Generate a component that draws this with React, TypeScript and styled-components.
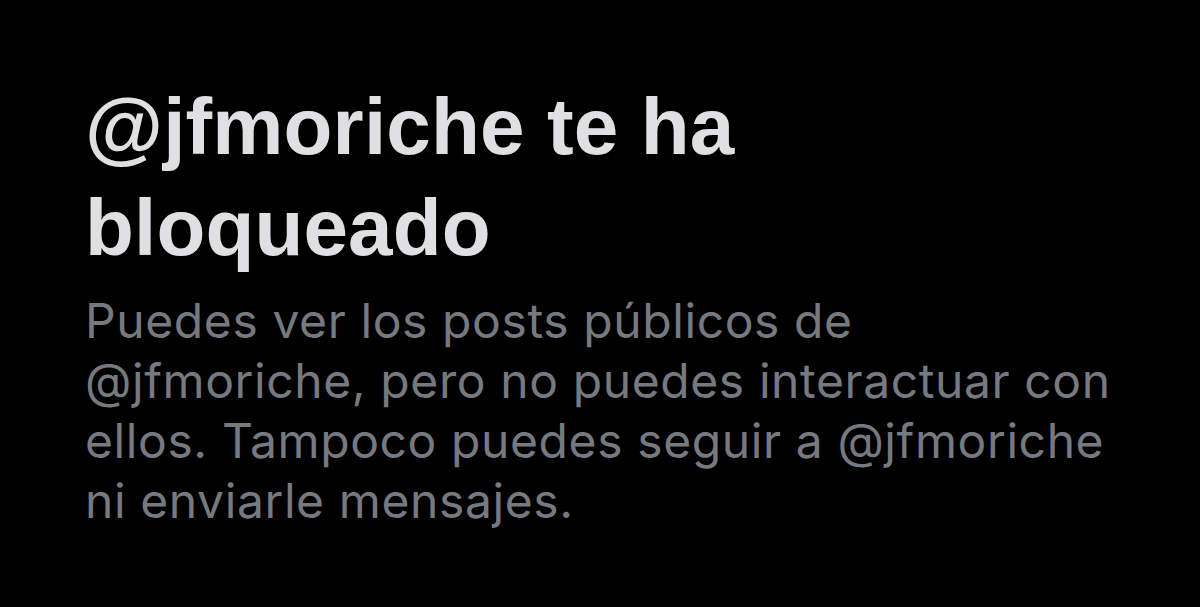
import React from 'react';
import styled, { createGlobalStyle } from 'styled-components';

const GlobalStyle = createGlobalStyle`
  html, body {
    margin: 0;
    padding: 0;
    background: #000;
  }
`;

const Page = styled.div`
  width: 1200px;
  height: 607px;
  background: #000;
  box-sizing: border-box;
  padding: 76px 60px 0 85px;
  display: flex;
  flex-direction: column;
  overflow: hidden;
`;

const Title = styled.h1`
  margin: 0;
  width: 720px;
  font-family: 'Liberation Sans', Arial, sans-serif;
  font-weight: 700;
  font-size: 80px;
  line-height: 101px;
  letter-spacing: 0.15px;
  color: #dfe0e1;
`;

const Body = styled.p`
  margin: 13px 0 0;
  width: 1045px;
  font-family: Inter, 'Noto Sans', sans-serif;
  font-weight: 400;
  font-size: 48px;
  line-height: 60px;
  letter-spacing: 0.6px;
  color: #767a80;
`;

const App = (): JSX.Element => {
  return (
    <Page>
      <GlobalStyle />
      <Title>@jfmoriche te ha bloqueado</Title>
      <Body>
        Puedes ver los posts públicos de
        <br />
        @jfmoriche, pero no puedes interactuar con ellos. Tampoco puedes
        seguir a @jfmoriche ni enviarle mensajes.
      </Body>
    </Page>
  );
};

export default App;
